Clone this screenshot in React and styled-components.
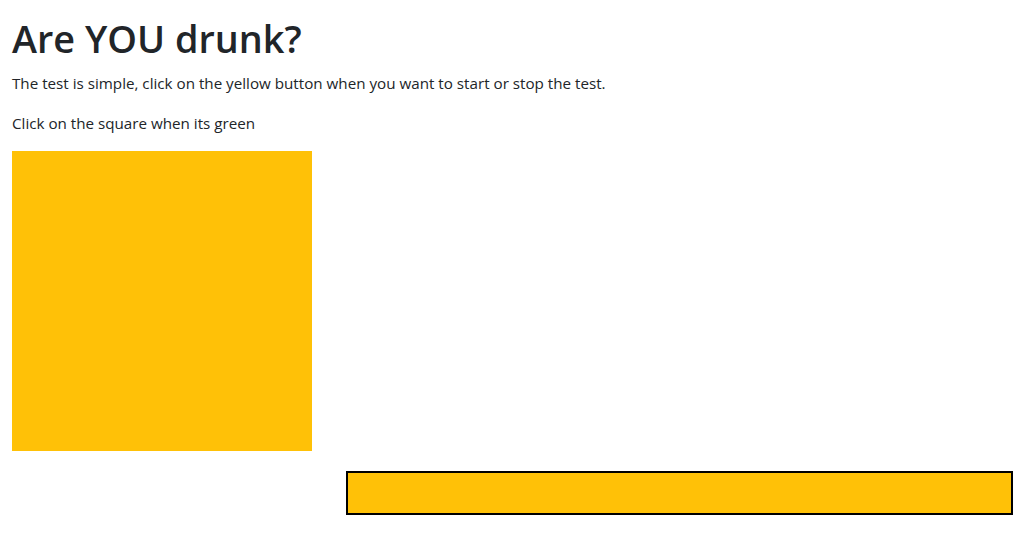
import React from "react";
import styled, { createGlobalStyle } from "styled-components";

const Global = createGlobalStyle`
  html, body { margin: 0; padding: 0; background: #fff; }
  body {
    font-family: "Open Sans", "Noto Sans", sans-serif;
    font-size: 15.2px;
    line-height: 24px;
    color: #212529;
  }
`;

const Page = styled.main`
  padding: 15px 12px 0 12px;
`;

const Title = styled.h1`
  margin: 0 0 8px 0;
  font-size: 37.8px;
  font-weight: 600;
  line-height: 48px;
`;

const Text = styled.p`
  margin: 0 0 16px 0;
`;

const Square = styled.div`
  width: 300px;
  height: 300px;
  background: #ffc107;
`;

const ButtonRow = styled.div`
  display: flex;
  padding: 20px 11px 0 334px;
`;

const YellowButton = styled.button`
  flex: 1;
  height: 44px;
  background: #ffc107;
  border: 2px solid #000;
  padding: 0;
  cursor: pointer;
`;

export default function App() {
  return (
    <>
      <Global />
      <Page>
        <Title>Are YOU drunk?</Title>
        <Text>The test is simple, click on the yellow button when you want to start or stop the test.</Text>
        <Text>Click on the square when its green</Text>
        <Square />
        <ButtonRow>
          <YellowButton aria-label="start or stop" />
        </ButtonRow>
      </Page>
    </>
  );
}
